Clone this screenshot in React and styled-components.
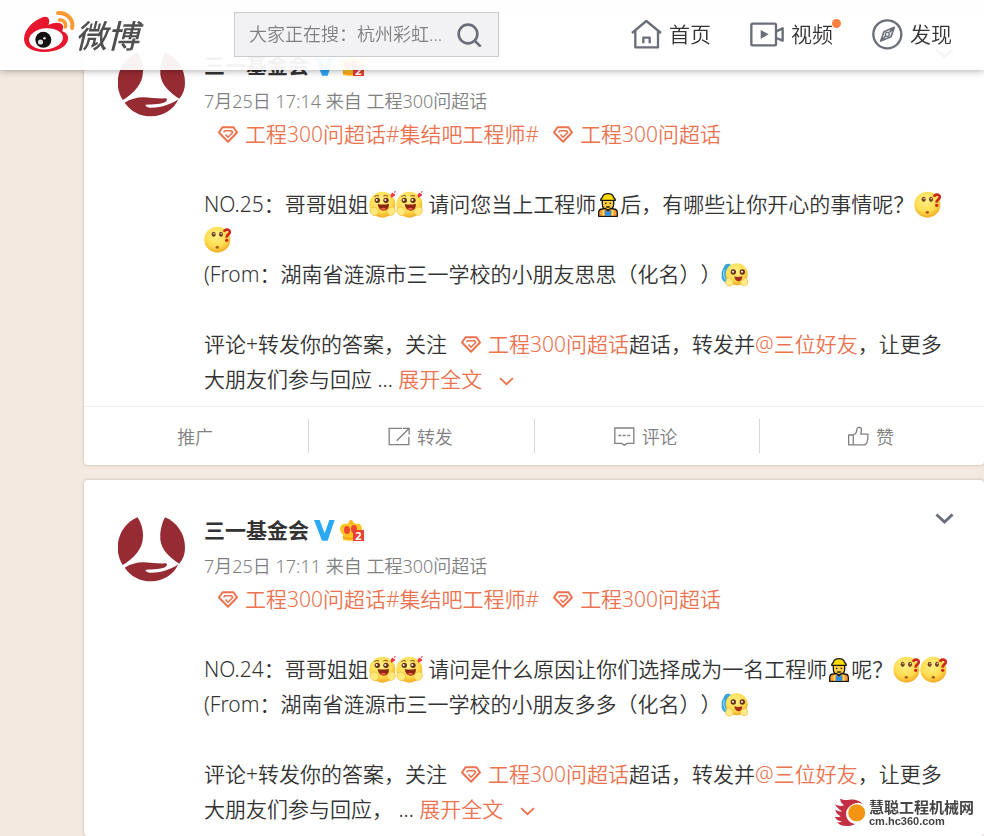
import React from 'react'
import styled, { createGlobalStyle } from 'styled-components'

const GlobalStyle = createGlobalStyle`
  * {
    box-sizing: border-box;
  }

  body {
    margin: 0;
    background: #f4e9e0;
    color: #333;
    font-family: "Noto Sans", "Noto Sans CJK SC", sans-serif;
    font-weight: 350;
    text-spacing-trim: space-all;
  }

  a {
    color: inherit;
    text-decoration: none;
  }

  button, input {
    font: inherit;
    color: inherit;
  }
`

const Page = styled.div`
  height: 100vh;
  overflow: hidden;
`

const Header = styled.header`
  position: fixed;
  top: 0;
  left: 0;
  right: 0;
  z-index: 10;
  height: 70px;
  padding: 0 32px 2px 24px;
  display: flex;
  align-items: center;
  background: rgba(255, 255, 255, 0.94);
  box-shadow: 0 0 8px rgba(0, 0, 0, 0.4);
`

const Logo = styled.a`
  display: flex;
  align-items: center;
  width: 210px;
  height: 64px;
  align-self: flex-start;
`

const LogoName = styled.span`
  margin-left: -2px;
  padding-top: 8px;
  font-size: 32px;
  line-height: 40px;
  font-weight: 500;
  font-style: italic;
  color: #505050;
`

const Search = styled.form`
  display: flex;
  align-items: center;
  width: 265px;
  height: 45px;
  padding: 0 16px 0 14px;
  background: #f2f2f5;
  border: 1px solid #ccc;
`

const SearchInput = styled.input`
  flex: 1;
  min-width: 0;
  padding: 0;
  border: 0;
  outline: 0;
  background: transparent;
  font-size: 18px;

  &::placeholder {
    color: #808080;
    opacity: 1;
  }
`

const IconButton = styled.button`
  display: flex;
  padding: 0;
  border: 0;
  background: transparent;
  color: #696e78;
  cursor: pointer;
`

const Nav = styled.nav`
  display: flex;
  gap: 39px;
  margin-left: auto;
`

const NavItem = styled.a`
  position: relative;
  display: flex;
  align-items: center;
  gap: 7px;
  font-size: 21px;
  line-height: 30px;

  svg {
    color: #696e78;
  }
`

const Dot = styled.i`
  position: absolute;
  top: 0;
  right: -8px;
  width: 9px;
  height: 9px;
  border-radius: 50%;
  background: #ff8140;
`

const Feed = styled.main`
  display: flex;
  flex-direction: column;
  gap: 15px;
  padding: 15px 0 0 84px;
`

const Card = styled.article`
  background: #fff;
  border-radius: 4px;
  box-shadow: 0 0 3px rgba(90, 60, 40, 0.35);
`

const CardBody = styled.div`
  display: flex;
  align-items: flex-start;
  gap: 18px;
  padding: 34px 24px 9px 34px;
`

const Content = styled.div`
  flex: 1;
  min-width: 0;
`

const NameRow = styled.div`
  display: flex;
  align-items: center;
  gap: 5px;
  height: 32px;
`

const Name = styled.a`
  font-size: 21px;
  line-height: 30px;
  font-weight: 700;
`

const MoreButton = styled(IconButton)`
  margin: -22px 6px 0 auto;
`

const Meta = styled.div`
  margin: 7px 0 3px;
  font-size: 18px;
  line-height: 26px;
  color: #808080;
`

const Text = styled.div`
  font-size: 21px;
  line-height: 35px;
`

const TextLink = styled.a`
  color: #eb7350;
`

const Expand = styled.button`
  padding: 0;
  border: 0;
  background: transparent;
  color: #eb7350;
  cursor: pointer;

  svg {
    margin-left: 17px;
    vertical-align: 1px;
  }
`

const TopicIcon = styled.svg`
  margin: 0 7px 0 14px;
  vertical-align: -1px;
`

const Face = styled.svg`
  width: 27px;
  height: 27px;
  vertical-align: -6px;
`

const Worker = styled.svg`
  width: 20px;
  height: 24px;
  margin: 0 2px;
  vertical-align: -5px;
`

const Crown = styled.svg`
  overflow: visible;
`

const Actions = styled.footer`
  display: flex;
  align-items: center;
  height: 59px;
  border-top: 1px solid #f0f0f0;
`

const Action = styled.button`
  flex: 1;
  display: flex;
  align-items: center;
  justify-content: center;
  gap: 7px;
  height: 34px;
  padding: 0 2px 0 0;
  border: 0;
  border-right: 1px solid #d9d9d9;
  background: transparent;
  font-size: 18px;
  color: #808080;
  cursor: pointer;

  &:last-child {
    border-right: 0;
  }
`

const Watermark = styled.aside`
  position: fixed;
  right: 10px;
  bottom: 9px;
  display: flex;
  align-items: center;
  gap: 2px;
  color: #444;
  font-weight: 700;
`

const MarkName = styled.div`
  font-size: 15px;
  line-height: 18px;
`

const MarkSite = styled.div`
  font-family: "Liberation Sans", sans-serif;
  font-size: 11px;
  line-height: 11px;
`

const WeiboLogo = () => (
  <svg width="53" height="44" viewBox="0 0 53 44" fill="none">
    <path fill="#e6162d" d="M0 29C0 20 9 11 17 8c6-3 10 0 7.500 7 5-2.500 12-3.500 14 0 1.500 2.500-.5 5.500 0 6.500 4 1 6 4 5.500 8C43 37 33 42 20 42 8 42 0 37 0 29z" />
    <ellipse cx="22" cy="28.800" rx="17" ry="10.500" transform="rotate(-6 22 29)" fill="#fff" />
    <circle cx="19.300" cy="29.800" r="8" fill="#111" />
    <circle cx="16.500" cy="32" r="2.600" fill="#ddd" />
    <circle cx="20.500" cy="28.300" r="1.300" fill="#ddd" />
    <path stroke="#ff9933" strokeWidth="4" strokeLinecap="round" d="M34 3c9-1 16 7 14 15" />
    <path stroke="#ff9933" strokeWidth="3.500" strokeLinecap="round" d="M35.500 10c4-.5 7 3 5.800 7" />
  </svg>
)

const SearchIcon = () => (
  <svg width="25" height="25" viewBox="710 70 75 75" fill="none" stroke="currentColor" strokeWidth="8">
    <circle cx="743" cy="106" r="28" />
    <path d="M763 126l18 18" />
  </svg>
)

const HomeIcon = () => (
  <svg width="31" height="31" viewBox="66 60 93 93" fill="none" stroke="currentColor" strokeWidth="7" strokeLinejoin="round">
    <path d="M69 102l43-36 44 36M79 95v50h68V95M103 133v-17h19v17" />
  </svg>
)

const VideoIcon = () => (
  <svg width="34" height="25" viewBox="421 66 102 75" fill="none" stroke="currentColor" strokeWidth="7" strokeLinejoin="round">
    <rect x="425" y="71" width="74" height="65" rx="4" />
    <path fill="currentColor" stroke="none" d="M453 90l24 13-24 14z" />
    <path d="M500 94l19-9v37l-19-8" />
  </svg>
)

const CompassIcon = () => (
  <svg width="31" height="31" viewBox="786 58 93 93" fill="none" stroke="currentColor" strokeWidth="7" strokeLinejoin="round">
    <circle cx="832" cy="104" r="42" />
    <path strokeWidth="5" d="M853 83l-10 28-31 13 10-28zM853 83l-15 15M812 124l15-15" />
    <circle cx="832" cy="104" r="6" strokeWidth="4" />
  </svg>
)

const Chevron = ({ width = 19, stroke = 3 }) => (
  <svg width={width} height={width * 0.6} viewBox="0 0 20 12" fill="none" stroke="currentColor" strokeWidth={stroke}>
    <path d="M1.500 1.500L10 9.500l8.500-8" />
  </svg>
)

const Avatar = () => (
  <svg width="68" height="68" viewBox="54 41 204 204" fill="#962b33">
    <path d="M113 51c15 24 19 49 14 74-7 30-32 53-59 69-10-16-15-34-15-52 0-42 25-77 60-91z" />
    <path d="M195 51c35 14 60 49 60 91 0 18-5 33-17 48-28-18-53-40-57-72-2-23 3-46 14-67z" />
    <path d="M74 202c16-10 36-16 56-16 20 1 45 4 67 3 6 1 5 7-1 11-11 6-36 7-59 8-2 3 3 7 13 9 35 1 65-11 85-25-13 30-45 51-81 51-34 0-62-15-80-41z" />
  </svg>
)

const VerifiedIcon = () => (
  <svg width="21" height="21" viewBox="640 60 63 63">
    <path fill="#2ba9f5" d="M640 60h17l15 40 14-40h16l-21 62h-17z" />
  </svg>
)

const CrownIcon = () => (
  <Crown width="25" height="21" viewBox="0 0 25 21">
    <path fill="#ffc425" d="M0 9c0-5 4-6 7-5 1-1 2-2 3-2a2 2 0 0 1 2 0c2 0 3 1 4 2 4-1 6 1 6 5 0 3-2 5-3 7v4c-3 1-13 1-16 0v-5C1 13 0 11 0 9z" />
    <ellipse cx="7" cy="10" rx="3" ry="4" fill="#f0452e" />
    <ellipse cx="14" cy="9" rx="3" ry="4" fill="#f0452e" />
    <circle cx="11" cy="2" r="2" fill="#ffb21a" />
    <path stroke="#ff9c1a" strokeWidth="1.500" fill="none" d="M3 17c4 2 8 2 11 1" />
    <rect x="13" y="10" width="11" height="11" fill="#ea3f34" />
    <text x="18.500" y="19.500" fontSize="11" fontWeight="700" textAnchor="middle" fill="#fff">2</text>
  </Crown>
)

const Topic = ({ children }) => (
  <TextLink href="#">
    <TopicIcon width="20" height="17" viewBox="0 0 20 17" fill="none" stroke="currentColor" strokeWidth="2" strokeLinejoin="round">
      <path d="M4.500 1.200h11L19 6.500l-9 9.300L1 6.500z" />
      <path strokeWidth="1.600" d="M5.500 6.300l1.500-1.500h6.500l1.200 1.700L10 11.200 7.500 8.500" />
    </TopicIcon>
    {children}
  </TextLink>
)

const FaceDefs = () => (
  <svg width="0" height="0" style={{ position: 'absolute' }}>
    <defs>
      <radialGradient id="skin" cx="0.45" cy="0.35" r="0.65">
        <stop offset="0" stopColor="#fff08a" />
        <stop offset="0.65" stopColor="#ffdc4f" />
        <stop offset="1" stopColor="#f2ac25" />
      </radialGradient>
    </defs>
  </svg>
)

const LoveFace = () => (
  <Face viewBox="0 0 81 81">
    <circle cx="40" cy="41" r="39" fill="url(#skin)" />
    <path fill="none" stroke="#8c4c16" strokeWidth="3" d="M16 17q7-6 14-2M43 15q8-4 14 1" />
    <circle cx="25" cy="28" r="8" fill="#6b3014" />
    <circle cx="51" cy="28" r="8" fill="#6b3014" />
    <circle cx="23" cy="27" r="3" fill="#fff" />
    <circle cx="49" cy="27" r="3" fill="#fff" />
    <path fill="#8b2712" d="M26 39q16 4 34-1 0 20-17 21-14-1-17-20z" />
    <path fill="#ef6040" d="M34 53q9-6 18 0-9 8-18 0z" />
    <g fill="#ffe978" stroke="#eeb538" strokeWidth="2">
      <path d="M10 49c6-4 18 3 19 12 0 11-13 17-21 9-8-7-6-18 2-21zM73 49c-6-4-18 3-19 12 0 11 13 16 20 9 7-7 7-18-1-21z" />
    </g>
    <path fill="#ed354b" d="M67 8c2-5 8-3 7 1 5-1 6 5 1 7l-8 4c-3-4-3-8 0-12zM76 1q4-2 4 2l-5 3z" />
  </Face>
)

const AskFace = () => (
  <Face viewBox="0 0 81 81">
    <circle cx="40" cy="41" r="39" fill="url(#skin)" />
    <ellipse cx="29" cy="25" rx="6" ry="8" fill="#73401c" />
    <ellipse cx="51" cy="25" rx="6" ry="8" fill="#73401c" />
    <circle cx="30" cy="23" r="2" fill="#fff" />
    <circle cx="52" cy="23" r="2" fill="#fff" />
    <ellipse cx="40" cy="64" rx="5" ry="4" fill="#ad5420" />
    <path fill="none" stroke="#cd2719" strokeWidth="8" d="M60 17q3-8 12-6 8 3 4 11c-2 4-9 5-8 13" />
    <circle cx="68" cy="43" r="5" fill="#cd2719" />
  </Face>
)

const HugFace = () => (
  <Face viewBox="0 0 81 81">
    <path fill="#36a6d9" d="M28 9Q11 5 9 19 1 28 2 42q-2 18 15 24l21-8z" />
    <path fill="none" stroke="#a5e0f6" strokeWidth="3" d="M9 26q-4 17 4 30" />
    <circle cx="47" cy="40" r="33" fill="url(#skin)" />
    <circle cx="37" cy="33" r="8" fill="#6b3014" />
    <circle cx="64" cy="33" r="8" fill="#6b3014" />
    <circle cx="36" cy="32" r="3" fill="#fff" />
    <circle cx="63" cy="32" r="3" fill="#fff" />
    <path fill="#a52b1d" d="M40 46q12 4 24 0-1 15-12 15-11-1-12-15z" />
    <g fill="#ffec87" stroke="#eeb538" strokeWidth="2">
      <path d="M20 49c5 0 5 6 10 6 8 3 8 13 2 18-8 6-20 0-18-10 0-6 4-8 6-14zM75 49c-5 0-4 6-10 7-8 3-8 13-2 17 9 4 18-1 17-10 0-6-4-7-5-14z" />
    </g>
  </Face>
)

const Engineer = () => (
  <Worker viewBox="0 0 60 72" stroke="#171717" strokeWidth="4" strokeLinejoin="round">
    <path fill="#ffcd3d" d="M13 19v15c0 11 8 17 17 17s17-6 17-17V19z" />
    <path fill="#ffdc00" d="M8 22c0-6 4-7 5-9 2-7 9-11 17-11s15 4 17 11c1 2 5 3 5 9z" />
    <path fill="#ff9e3d" d="M2 70V57q1-8 10-9l10-2 8 8 8-8 10 2q9 1 10 9v13z" />
    <path fill="#2792ee" stroke="none" d="M21 50l9 8 9-8v18H21z" />
    <path stroke="#ffe657" fill="none" d="M16 52v16M44 52v16" />
    <path fill="none" d="M23 29v4M37 29v4M25 41q5 3 10 0" />
  </Worker>
)

const ShareIcon = () => (
  <svg width="22" height="19" viewBox="922 80 66 58" fill="none" stroke="currentColor" strokeWidth="4">
    <path d="M964 84h-39v50h60v-24M948 122l36-36M967 84h19v19" />
  </svg>
)

const CommentIcon = () => (
  <svg width="21" height="19" viewBox="221 80 63 58" fill="none" stroke="currentColor" strokeWidth="4">
    <path d="M223 83h58v47h-21l-8 6-8-6h-21zM234 106h9M247 106h9M261 106h9" />
  </svg>
)

const LikeIcon = () => (
  <svg width="21" height="20" viewBox="923 79 64 60" fill="none" stroke="currentColor" strokeWidth="4" strokeLinejoin="round">
    <path d="M925 106h14v30h-14zM939 106c6-3 11-8 11-17 0-9 14-8 14 1 0 5-1 9-2 13h22c0 14-1 33-12 33h-33" />
  </svg>
)

const FlameIcon = () => (
  <svg width="32" height="29" viewBox="42 55 96 86">
    <path fill="#c42e43" d="M58 57c14 7 24 2 38 2 13 1 23 6 29 14-9-5-16-5-24-1-18 6-29 19-25 37 3 13 12 19 26 24-22 9-42 7-54-6 7 1 12 0 15-3-11 0-18-5-22-14 7 3 13 2 18-1-9-4-15-10-16-20 7 5 14 7 20 5-10-6-16-12-21-20 10 4 19 6 27 2-8-5-12-11-11-19z" />
    <circle cx="107" cy="99" r="27" fill="#f39511" stroke="#fff" strokeWidth="3" />
  </svg>
)

const Post = ({ time, children, actions }) => (
  <Card>
    <CardBody>
      <a href="#" aria-label="三一基金会"><Avatar /></a>
      <Content>
        <NameRow>
          <Name href="#">三一基金会</Name>
          <VerifiedIcon />
          <CrownIcon />
          <MoreButton type="button" aria-label="更多"><Chevron /></MoreButton>
        </NameRow>
        <Meta><a href="#">{time}</a> 来自 <a href="#">工程300问超话</a></Meta>
        <Text>
          <Topic>工程300问超话</Topic>
          <TextLink href="#">#集结吧工程师#</TextLink>
          <Topic>工程300问超话</Topic>
          <br /><br />
          {children}
        </Text>
      </Content>
    </CardBody>
    {actions && (
      <Actions>
        <Action type="button">推广</Action>
        <Action type="button"><ShareIcon />转发</Action>
        <Action type="button"><CommentIcon />评论</Action>
        <Action type="button"><LikeIcon />赞</Action>
      </Actions>
    )}
  </Card>
)

const Closing = ({ ending }) => (
  <>
    <br /><br />
    评论+转发你的答案，关注<Topic>工程300问超话</Topic>超话，转发并<TextLink href="#">@三位好友</TextLink>，让更多大朋友们参与回应{ending} ...{' '}
    <Expand type="button">展开全文<Chevron width={15} stroke={2.5} /></Expand>
  </>
)

const App = () => {
  return (
    <Page>
      <GlobalStyle />
      <FaceDefs />
      <Header>
        <Logo href="#">
          <WeiboLogo />
          <LogoName>微博</LogoName>
        </Logo>
        <Search>
          <SearchInput type="text" aria-label="搜索" placeholder="大家正在搜：杭州彩虹..." />
          <IconButton type="button" aria-label="搜索"><SearchIcon /></IconButton>
        </Search>
        <Nav>
          <NavItem href="#"><HomeIcon />首页</NavItem>
          <NavItem href="#"><VideoIcon />视频<Dot /></NavItem>
          <NavItem href="#"><CompassIcon />发现</NavItem>
        </Nav>
      </Header>
      <Feed>
        <Post time="7月25日 17:14" actions>
          NO.25：哥哥姐姐<LoveFace /><LoveFace /> 请问您当上工程师<Engineer />后，有哪些让你开心的事情呢？<AskFace /><AskFace />
          <br />
          (From：湖南省涟源市三一学校的小朋友思思（化名））<HugFace />
          <Closing ending="" />
        </Post>
        <Post time="7月25日 17:11">
          NO.24：哥哥姐姐<LoveFace /><LoveFace /> 请问是什么原因让你们选择成为一名工程师<Engineer />呢？<AskFace /><AskFace />
          <br />
          (From：湖南省涟源市三一学校的小朋友多多（化名））<HugFace />
          <Closing ending="，" />
        </Post>
      </Feed>
      <Watermark>
        <FlameIcon />
        <div>
          <MarkName>慧聪工程机械网</MarkName>
          <MarkSite>cm.hc360.com</MarkSite>
        </div>
      </Watermark>
    </Page>
  )
}

export default App
